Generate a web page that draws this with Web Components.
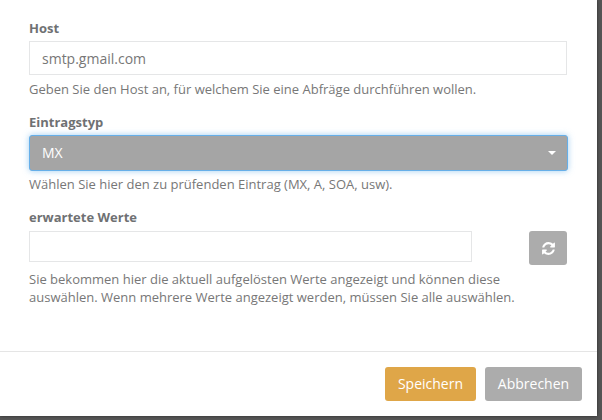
<!DOCTYPE html>
<html><head><meta charset="utf-8">
<style>
html,body{margin:0;padding:0;width:602px;height:420px;overflow:hidden;background:#555;}
</style></head>
<body>
<modal-dialog>
  <form-group label="Host" help="Geben Sie den Host an, für welchem Sie eine Abfräge durchführen wollen." style="height:94px;--label-h:22px">
    <text-box value="smtp.gmail.com" style="width:538px;height:34px"></text-box>
  </form-group>
  <form-group label="Eintragstyp" help="Wählen Sie hier den zu prüfenden Eintrag (MX, A, SOA, usw)." style="height:95px;--label-h:22px;--help-gap:4px">
    <select-box value="MX"></select-box>
  </form-group>
  <form-group label="erwartete Werte" help="Sie bekommen hier die aktuell aufgelösten Werte angezeigt und können diese auswählen. Wenn mehrere Werte angezeigt werden, müssen Sie alle auswählen." style="--label-h:23px">
    <value-row></value-row>
  </form-group>
  <action-button slot="footer" kind="primary">Speichern</action-button>
  <action-button slot="footer" kind="default">Abbrechen</action-button>
</modal-dialog>
<script>
const base=":host{font-family:'Open Sans','Noto Sans',sans-serif;box-sizing:border-box}";
class Base extends HTMLElement{
  render(html){ if(!this.shadowRoot) this.attachShadow({mode:'open'}); this.shadowRoot.innerHTML=html; }
}
customElements.define('modal-dialog',class extends Base{connectedCallback(){this.render(`<style>${base}
:host{display:flex;flex-direction:column;width:597px;height:416px;background:#fff;box-shadow:0 0 3px rgba(0,0,0,.5)}
.body{flex:none;height:351px;box-sizing:border-box;padding:19px 29px 0}
.foot{flex:none;height:65px;box-sizing:border-box;border-top:1px solid #e5e5e5;padding:15px 15px 0 0;display:flex;justify-content:flex-end;gap:9px}
</style><div class="body"><slot></slot></div><div class="foot"><slot name="footer"></slot></div>`)}});
customElements.define('form-group',class extends Base{connectedCallback(){this.render(`<style>${base}
:host{display:block;color:#676a6c}
label{display:block;font-size:13px;font-weight:700;line-height:18px;height:var(--label-h,22px);color:#6f7173}
p{margin:var(--help-gap,5px) 0 0;font-size:13px;line-height:18px;color:#777}
</style><label>${this.getAttribute('label')}</label><slot></slot><p>${this.getAttribute('help')}</p>`)}});
customElements.define('text-box',class extends Base{connectedCallback(){this.render(`<style>${base}
:host{display:flex;align-items:center;border:1px solid #e5e6e7;background:#fff;padding:0 12px;font-size:14px;color:#777}
</style>${this.getAttribute('value')||''}`)}});
customElements.define('select-box',class extends Base{connectedCallback(){this.render(`<style>${base}
:host{display:flex;align-items:center;justify-content:space-between;width:539px;height:36px;border:1px solid #66afe9;border-radius:3px;background:#a5a5a5;padding:0 12px 2px;font-size:14px;font-weight:500;color:#fff;box-shadow:0 0 6px rgba(102,175,233,.6)}
i{width:0;height:0;border:4px solid transparent;border-top-color:#fff;border-bottom:0;margin:2px -1px 0 0}
</style>${this.getAttribute('value')}<i></i>`)}});
customElements.define('value-row',class extends Base{connectedCallback(){this.render(`<style>${base}
:host{display:flex;align-items:flex-start;justify-content:space-between;width:538px}
button{width:38px;height:34px;padding:0;border:0;border-radius:3px;background:#acacac;display:flex;align-items:center;justify-content:center}
text-box{width:443px;height:31px}
</style><text-box></text-box><button aria-label="Aktualisieren"><svg width="13" height="15" viewBox="0 0 1536 1792" fill="#fff"><path d="M1511 1056q0 5-1 7-64 268-268 434.500t-478 166.500q-146 0-282.500-55t-243.500-157l-129 129q-19 19-45 19t-45-19-19-45v-448q0-26 19-45t45-19h448q26 0 45 19t19 45-19 45l-137 137q71 66 161 102t187 36q134 0 250-65t186-179q11-17 53-117 8-23 30-23h192q13 0 22.500 9.500t9.500 22.500zm25-800v448q0 26-19 45t-45 19h-448q-26 0-45-19t-19-45 19-45l138-138q-148-137-349-137-134 0-250 65t-186 179q-11 17-53 117-8 23-30 23h-199q-13 0-22.500-9.500t-9.500-22.500v-7q65-268 270-434.500t480-166.500q146 0 284 55.500t245 156.500l130-129q19-19 45-19t45 19 19 45z"/></svg></button>`)}});
customElements.define('action-button',class extends Base{connectedCallback(){const p=this.getAttribute('kind')==='primary';this.render(`<style>${base}
:host{display:flex;align-items:center;justify-content:center;box-sizing:border-box;padding-bottom:1px;height:34px;width:${p?91:97}px;border-radius:3px;background:${p?'#dfa648':'#acacac'};color:#fff;font-size:14px}
</style><slot></slot>`)}});
</script>
</body></html>
